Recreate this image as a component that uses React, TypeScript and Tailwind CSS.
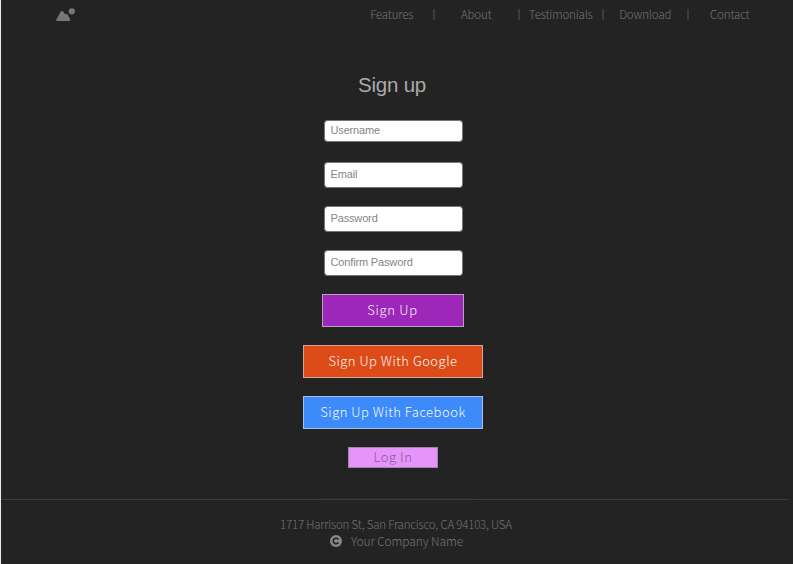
import type { ReactNode } from "react";

const nav = ["Features", "About", "Testimonials", "Download", "Contact"];

function Field({ label, className }: { label: string; className: string }) {
  return (
    <input
      placeholder={label}
      className={`block w-[139px] rounded-[3px] border border-[#777] bg-white bg-clip-padding px-[6px] pb-[2px] font-['Liberation_Sans',Arial,sans-serif] text-[11px] font-normal tracking-[-0.15px] text-[#555] outline-none placeholder:text-[#858585] ${className}`}
    />
  );
}

function Button({ children, className }: { children: ReactNode; className: string }) {
  return (
    <button className={`flex items-center justify-center whitespace-nowrap border text-[13px] ${className}`}>
      {children}
    </button>
  );
}

export default function App() {
  return (
    <div className="h-[564px] w-[793px] overflow-hidden border-l border-[#e8eaec] bg-[#232323] font-['Noto_Sans_CJK_SC','Noto_Sans',sans-serif] font-light">
      <header className="flex h-[28px] justify-between pl-[55px] pr-[21px]">
        <svg className="mt-[8px] h-[13px] w-[19px]" viewBox="0 0 19 13" fill="#777">
          <path d="M1.2 13Q-.3 12.8.5 11.2L4.3 4.2Q6 1.6 7.7 4.2L9 6.3Q10.8 5.2 11.8 7L14 11.1Q14.6 12.8 13.2 13Z" />
          <circle cx="15.8" cy="3.3" r="3.1" />
        </svg>
        <nav className="flex h-[28px]">
          {nav.map((item, i) => (
            <div key={item} className="relative flex w-[84.5px] justify-center text-[11.5px] leading-[29px] tracking-[-0.15px] text-[#747474]">
              {item}
              {i > 0 && <span className="absolute -left-px top-[9px] h-[11px] w-[2px] bg-[#3c3c3c]" />}
            </div>
          ))}
        </nav>
      </header>
      <main className="flex h-[471px] flex-col items-center pr-[8px]">
        <h1 className="mr-[2px] mt-[45px] h-[24px] font-['Liberation_Sans',Arial,sans-serif] text-[20.5px] font-normal leading-[24px] tracking-[-0.2px] text-[#aaa]">Sign up</h1>
        <Field label="Username" className="mt-[23px] h-[22px]" />
        <Field label="Email" className="mt-[20px] h-[26px]" />
        <Field label="Password" className="mt-[18px] h-[26px]" />
        <Field label="Confirm Pasword" className="mt-[18px] h-[26px]" />
        <Button className="mr-px mt-[18px] h-[33px] w-[142px] border-[#b9a0be] bg-[#9c27b8] pb-[2px] tracking-[0.7px] text-[#fbf2fd]">Sign Up</Button>
        <Button className="mt-[18px] h-[33px] w-[180px] border-[#d3a593] bg-[#dd4b18] pb-[2px] tracking-[0.5px] text-[#fff6f2]">Sign Up With Google</Button>
        <Button className="mt-[18px] h-[33px] w-[180px] border-[#a3bfe8] bg-[#3d8bfa] pb-[2px] tracking-[0.5px] text-[#f6faff]">Sign Up With Facebook</Button>
        <Button className="mt-[18px] h-[21px] w-[90px] border-[#a383aa] bg-[#e794fa] pb-px tracking-[0.6px] text-[#875c94]">Log In</Button>
        <div className="ml-[10px] mt-[30px] h-px w-[156px] bg-[#2b2b2b]" />
      </main>
      <footer className="mr-[4px] flex h-[65px] flex-col items-center border-t border-[#3b3b3b] text-[12px] text-[#747474]">
        <div className="ml-[2px] mt-[15px] h-[17px] text-[11.5px] leading-[19px] tracking-[-0.2px]">1717 Harrison St, San Francisco, CA 94103, USA</div>
        <div className="ml-[3px] flex h-[17px] items-center gap-[9px] leading-[17px] tracking-[-0.1px]">
          <svg className="mt-px h-[12px] w-[12px]" viewBox="0 0 12 12">
            <circle cx="6" cy="6" r="6" fill="#888" />
            <path d="M8.4 4.5A2.8 2.8 0 1 0 8.4 7.5" fill="none" stroke="#232323" strokeWidth="1.6" />
          </svg>
          Your Company Name
        </div>
      </footer>
    </div>
  );
}
